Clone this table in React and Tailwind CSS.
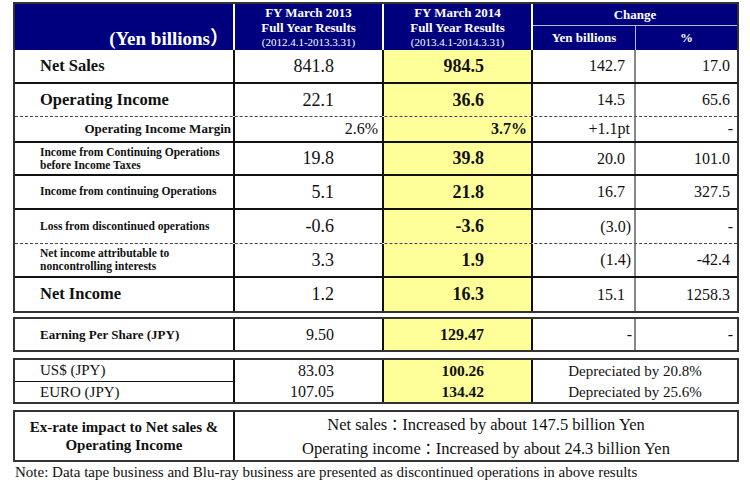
import React from 'react';

// FY results summary table (yen billions)
const grid = 'grid grid-cols-[220px_149px_149px_103px_101px]';

const rows = [
  { h: 'h-[34px]', label: 'Net Sales', size: 'big', a: '841.8', b: '984.5', c: '142.7', d: '17.0' },
  { h: 'h-[33px]', label: 'Operating Income', size: 'big', a: '22.1', b: '36.6', c: '14.5', d: '65.6', dashed: true },
  { h: 'h-[26px]', label: 'Operating Income Margin', size: 'margin', a: '2.6%', b: '3.7%', c: '+1.1pt', d: '-' },
  { h: 'h-[33px]', label: ['Income from Continuing Operations', 'before Income Taxes'], a: '19.8', b: '39.8', c: '20.0', d: '101.0' },
  { h: 'h-[34px]', label: 'Income from continuing Operations', a: '5.1', b: '21.8', c: '16.7', d: '327.5' },
  { h: 'h-[34px]', label: 'Loss from discontinued operations', a: '-0.6', b: '-3.6', c: '(3.0)', d: '-', dashed: true },
  { h: 'h-[34px]', label: ['Net income attributable to', 'noncontrolling interests'], a: '3.3', b: '1.9', c: '(1.4)', d: '-42.4' },
  { h: 'h-[33px]', label: 'Net Income', size: 'big', a: '1.2', b: '16.3', c: '15.1', d: '1258.3', last: true },
];

function Label({ row }) {
  if (row.size === 'big') {
    return <div className="w-full pl-[25px] text-[16.5px] font-bold flex items-center">{row.label}</div>;
  }
  if (row.size === 'margin') {
    return <div className="w-full pr-[2px] text-[13px] font-bold flex items-center justify-end">{row.label}</div>;
  }
  if (Array.isArray(row.label)) {
    return (
      <div className="w-full pl-[25px] text-[11.5px] leading-[13px] font-bold flex flex-col justify-center">
        <span>{row.label[0]}</span>
        <span>{row.label[1]}</span>
      </div>
    );
  }
  return <div className="w-full pl-[25px] text-[11.5px] font-bold flex items-center">{row.label}</div>;
}

function BodyRow({ row }) {
  const margin = row.size === 'margin';
  const line = row.last ? '' : row.dashed ? 'border-b border-dashed border-[#444]' : 'border-b-2 border-[#111]';
  const paren = row.c.startsWith('(');
  return (
    <div className={`${grid} ${row.h} ${line}`}>
      <div className="border-r-2 border-[#111] flex">
        <Label row={row} />
      </div>
      <div className={`border-r-2 border-[#111] flex items-center justify-end ${margin ? 'pr-[4px] text-[16px]' : 'pr-[48px] text-[18px]'}`}>
        {row.a}
      </div>
      <div className={`border-r-2 border-[#111] bg-[#ffff99] font-bold flex items-center justify-end ${margin ? 'pr-[4px] text-[16px]' : 'pr-[47px] text-[18px]'}`}>
        {row.b}
      </div>
      <div className={`border-r-2 border-[#888] flex items-center justify-end text-[16px] ${margin ? 'pr-[4px]' : paren ? 'pr-[3px]' : 'pr-[9px]'}`}>
        {row.c}
      </div>
      <div className={`flex items-center justify-end text-[16px] ${row.d === '-' ? 'pr-[4px]' : 'pr-[7px]'}`}>{row.d}</div>
    </div>
  );
}

export default function App() {
  return (
    <div className="bg-white w-[750px] h-[486px] pt-[2px] pl-[13px] text-[#111] font-['Liberation_Serif','Times_New_Roman',serif]">
      <div className="w-[726px] border-2 border-[#333]">
        <div className="grid grid-cols-[220px_149px_149px_103px_101px] grid-rows-[22px_24px] h-[46px] bg-[#00007f] text-white">
          <div className="row-span-2 border-r-2 border-white flex items-end justify-end pr-[4px] pb-[2px] text-[19px] leading-none font-bold">
            <span className="leading-none">
              (Yen billions<span className="font-['Noto_Sans_CJK_JP',serif] leading-none">）</span>
            </span>
          </div>
          <div className="row-span-2 border-r-2 border-white flex flex-col items-center pt-[1px] leading-[15px]">
            <span className="text-[13px] font-bold">FY March 2013</span>
            <span className="text-[13px] font-bold">Full Year Results</span>
            <span className="text-[11px]">(2012.4.1-2013.3.31)</span>
          </div>
          <div className="row-span-2 border-r-2 border-white flex flex-col items-center pt-[1px] leading-[15px]">
            <span className="text-[13px] font-bold">FY March 2014</span>
            <span className="text-[13px] font-bold">Full Year Results</span>
            <span className="text-[11px]">(2013.4.1-2014.3.31)</span>
          </div>
          <div className="col-span-2 border-b border-[#b8b8e0] flex items-center justify-center text-[13px] font-bold">
            Change
          </div>
          <div className="border-r border-[#b8b8e0] flex items-center justify-center text-[13px] font-bold">
            Yen billions
          </div>
          <div className="flex items-center justify-center text-[13px] font-bold">%</div>
        </div>
        {rows.map((r) => (
          <BodyRow key={r.label.toString()} row={r} />
        ))}
      </div>

      <div className={`mt-[4px] w-[726px] border-2 border-[#333] ${grid} h-[35px]`}>
        <div className="border-r-2 border-[#111] pl-[25px] flex items-center text-[13px] font-bold">Earning Per Share (JPY)</div>
        <div className="border-r-2 border-[#111] flex items-center justify-end pr-[48px] text-[16px]">9.50</div>
        <div className="border-r-2 border-[#111] bg-[#ffff99] flex items-center justify-end pr-[47px] text-[16px] font-bold">129.47</div>
        <div className="border-r-2 border-[#888] flex items-center justify-end pr-[2px] text-[16px]">-</div>
        <div className="flex items-center justify-end pr-[4px] text-[16px]">-</div>
      </div>

      <div className={`mt-[6px] w-[726px] border-2 border-[#333] ${grid} grid-rows-[22px_20px]`}>
        <div className="border-r-2 border-b border-[#111] pl-[25px] flex items-center text-[15px]">US$ (JPY)</div>
        <div className="border-r-2 border-[#111] flex items-center justify-end pr-[48px] text-[16px]">83.03</div>
        <div className="border-r-2 border-[#111] bg-[#ffff99] flex items-center justify-end pr-[47px] text-[15.5px] font-bold">100.26</div>
        <div className="col-span-2 flex items-center justify-center text-[15px]">Depreciated by 20.8%</div>
        <div className="border-r-2 border-[#111] pl-[25px] flex items-center text-[15px]">EURO (JPY)</div>
        <div className="border-r-2 border-[#111] flex items-center justify-end pr-[48px] text-[16px]">107.05</div>
        <div className="border-r-2 border-[#111] bg-[#ffff99] flex items-center justify-end pr-[47px] text-[15.5px] font-bold">134.42</div>
        <div className="col-span-2 flex items-center justify-center text-[15px]">Depreciated by 25.6%</div>
      </div>

      <div className="mt-[6px] w-[726px] h-[52px] border-2 border-[#333] grid grid-cols-[220px_1fr]">
        <div className="border-r-2 border-[#111] flex flex-col items-center justify-center text-[15px] leading-[18px] font-bold">
          <span>Ex-rate impact to Net sales &amp;</span>
          <span>Operating Income</span>
        </div>
        <div className="flex flex-col items-center justify-center text-[16.5px] leading-[23px]">
          <span>
            Net sales<span className="font-['Noto_Sans_CJK_JP',serif] text-[15px]">：</span>Increased by about 147.5 billion Yen
          </span>
          <span>
            Operating income<span className="font-['Noto_Sans_CJK_JP',serif] text-[15px]">：</span>Increased by about 24.3 billion Yen
          </span>
        </div>
      </div>

      <p className="mt-[1px] ml-[2px] text-[15px] leading-[18px]">
        Note: Data tape business and Blu-ray business are presented as discontinued operations in above results
      </p>
    </div>
  );
}
